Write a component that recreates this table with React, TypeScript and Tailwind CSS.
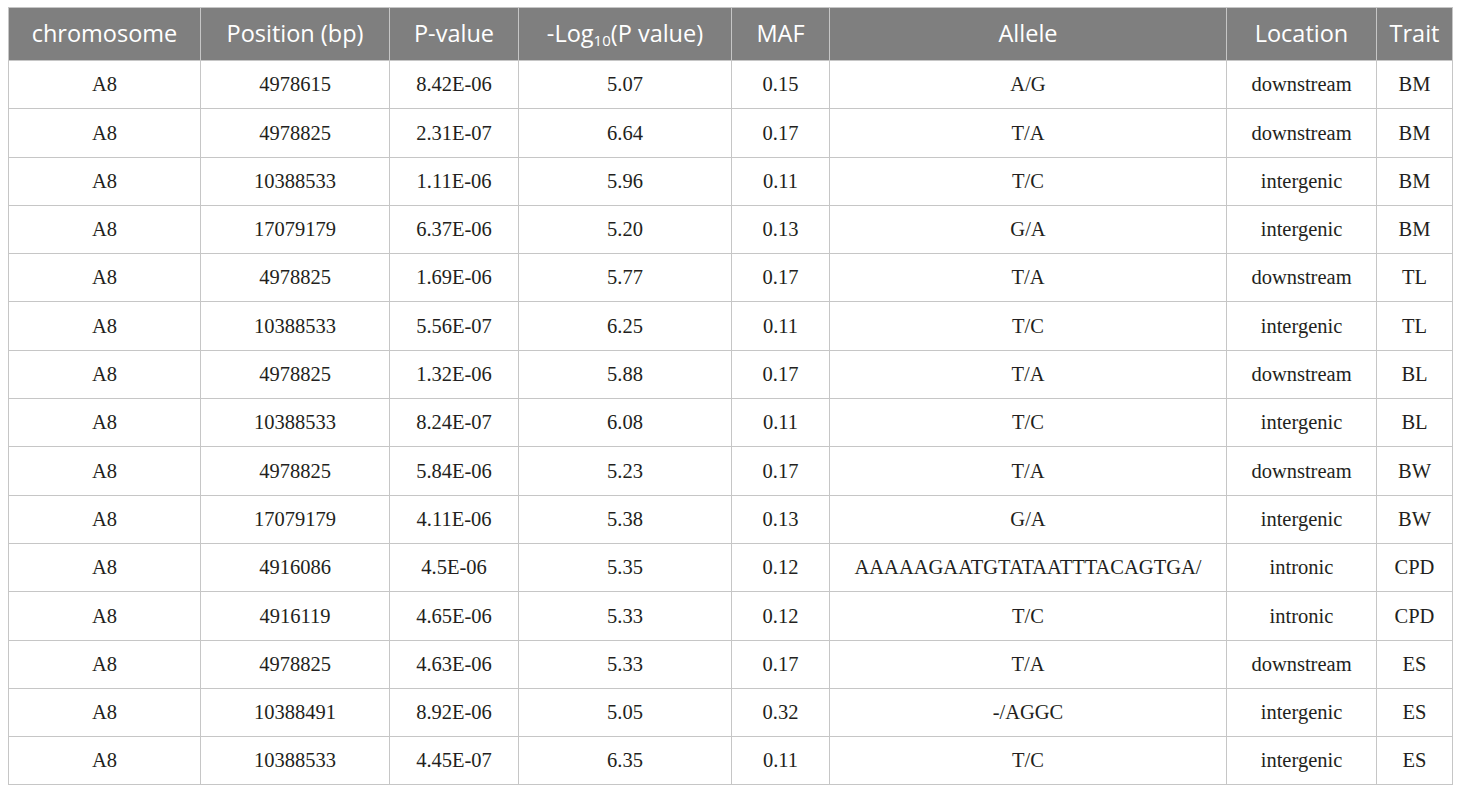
import React from "react";

const rows = [
  ["A8", "4978615", "8.42E-06", "5.07", "0.15", "A/G", "downstream", "BM"],
  ["A8", "4978825", "2.31E-07", "6.64", "0.17", "T/A", "downstream", "BM"],
  ["A8", "10388533", "1.11E-06", "5.96", "0.11", "T/C", "intergenic", "BM"],
  ["A8", "17079179", "6.37E-06", "5.20", "0.13", "G/A", "intergenic", "BM"],
  ["A8", "4978825", "1.69E-06", "5.77", "0.17", "T/A", "downstream", "TL"],
  ["A8", "10388533", "5.56E-07", "6.25", "0.11", "T/C", "intergenic", "TL"],
  ["A8", "4978825", "1.32E-06", "5.88", "0.17", "T/A", "downstream", "BL"],
  ["A8", "10388533", "8.24E-07", "6.08", "0.11", "T/C", "intergenic", "BL"],
  ["A8", "4978825", "5.84E-06", "5.23", "0.17", "T/A", "downstream", "BW"],
  ["A8", "17079179", "4.11E-06", "5.38", "0.13", "G/A", "intergenic", "BW"],
  ["A8", "4916086", "4.5E-06", "5.35", "0.12", "AAAAAGAATGTATAATTTACAGTGA/", "intronic", "CPD"],
  ["A8", "4916119", "4.65E-06", "5.33", "0.12", "T/C", "intronic", "CPD"],
  ["A8", "4978825", "4.63E-06", "5.33", "0.17", "T/A", "downstream", "ES"],
  ["A8", "10388491", "8.92E-06", "5.05", "0.32", "-/AGGC", "intergenic", "ES"],
  ["A8", "10388533", "4.45E-07", "6.35", "0.11", "T/C", "intergenic", "ES"],
];

const widths = [192, 189, 129, 213, 98, 397, 150, 76];

export default function App() {
  return <div className="min-h-screen bg-white pl-[8px] pt-[7px]">
    <table className="table-fixed border-collapse border border-[#c6c6c6]" style={{ width: 1445 }}>
      <colgroup>
        {widths.map((w, i) => <col key={i} style={{ width: w }} />)}
      </colgroup>
      <thead>
        <tr className="h-[53px] bg-[#7f7f7f] text-[23.5px] font-normal text-white [font-family:'Open_Sans',sans-serif]">
          <th className="border border-[#c6c6c6] font-normal">chromosome</th>
          <th className="border border-[#c6c6c6] font-normal">Position (bp)</th>
          <th className="border border-[#c6c6c6] font-normal">P-value</th>
          <th className="border border-[#c6c6c6] font-normal">-Log<sub className="text-[15px]">10</sub>(P value)</th>
          <th className="border border-[#c6c6c6] font-normal">MAF</th>
          <th className="border border-[#c6c6c6] font-normal">Allele</th>
          <th className="border border-[#c6c6c6] font-normal">Location</th>
          <th className="border border-[#c6c6c6] font-normal">Trait</th>
        </tr>
      </thead>
      <tbody className="text-[20.5px] text-[#231f20] [font-family:'Liberation_Serif',serif]">
        {rows.map((r, i) => <tr key={i} className="h-[48.3px]">
          {r.map((c, j) => <td key={j} className="border border-[#c6c6c6] p-0 text-center">{c}</td>)}
        </tr>)}
      </tbody>
    </table>
  </div>;
}
